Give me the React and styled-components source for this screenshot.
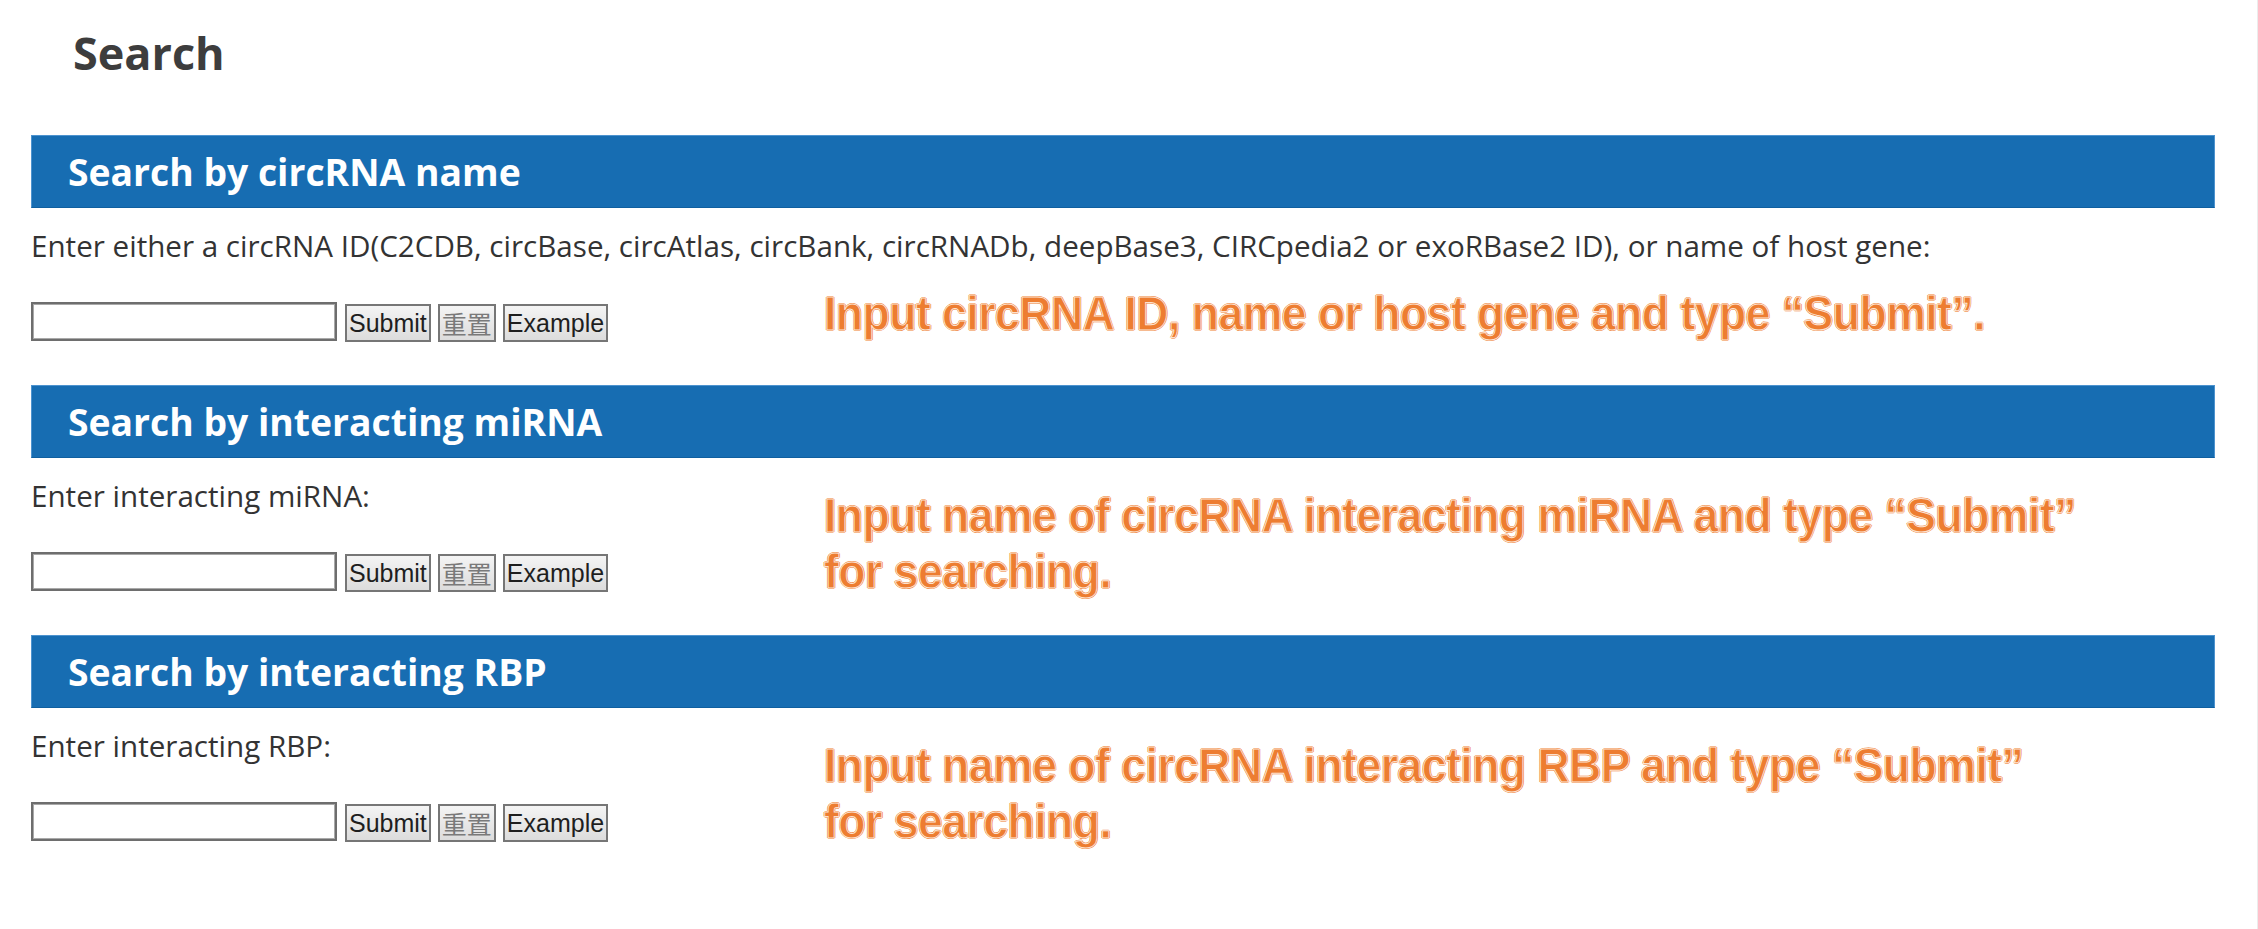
import React from "react";
import styled, { createGlobalStyle, css } from "styled-components";

const GlobalStyle = createGlobalStyle`
  html, body { margin: 0; padding: 0; background: #ffffff; }
  body { font-family: "Open Sans", "Noto Sans", sans-serif; color: #333333; }
`;

const Page = styled.div`
  box-sizing: border-box;
  min-height: 100vh;
  padding: 0 42px 0 31px;
  border-right: 1px solid #ececec;
`;

const Title = styled.h1`
  margin: 0;
  padding: 25px 0 0 42px;
  height: 135px;
  box-sizing: border-box;
  font-size: 45px;
  line-height: 56px;
  font-weight: 700;
  color: #3d3d3d;
`;

const Section = styled.section`
  padding-bottom: 44px;
`;

const Bar = styled.div`
  box-sizing: border-box;
  height: 73px;
  display: flex;
  align-items: center;
  padding-left: 36px;
  background: #176db2;
  border: 1px solid #4d93cf;
  border-bottom-color: #0f5f9f;
`;

const BarTitle = styled.h2`
  margin: 0;
  font-size: 37.3px;
  line-height: 50px;
  font-weight: 700;
  color: #ffffff;
`;

const Body = styled.div`
  display: grid;
  grid-template-columns: 793px 1fr;
  grid-template-rows: 36px 39px;
  row-gap: 38px;
  padding-top: 20px;
  ${({ $layout }) =>
    $layout === "stacked"
      ? css`grid-template-areas: "desc desc" "form note";`
      : css`grid-template-areas: "desc note" "form note";`}
`;

const Desc = styled.p`
  grid-area: desc;
  margin: 0;
  font-size: 29.6px;
  line-height: 36px;
  color: #333333;
  white-space: nowrap;
`;

const Form = styled.form`
  grid-area: form;
  display: flex;
  align-items: center;
  gap: 7px;
`;

const TextInput = styled.input`
  box-sizing: border-box;
  width: 306px;
  height: 39px;
  margin-right: 1px;
  border: 2px solid #6e6e6e;
  box-shadow: inset 0 0 0 1px #a9a9a9;
  background: #ffffff;
  padding: 2px 4px;
  font-size: 24px;
`;

const Button = styled.button`
  box-sizing: border-box;
  height: 38px;
  margin-top: 2px;
  padding: 0 2px;
  border: 2px solid #767676;
  background: linear-gradient(#f4f4f4, #dcdcdc);
  font-family: "Liberation Sans", Arial, sans-serif;
  font-size: 25px;
  line-height: 32px;
  color: #1e1e1e;
  cursor: pointer;
  ${({ $cjk }) =>
    $cjk &&
    css`
      font-family: "Noto Sans CJK TC", "Noto Sans CJK SC", serif;
      font-size: 25px;
      color: #7a7a7a;
    `}
`;

const Note = styled.p`
  grid-area: note;
  margin: 0;
  font-family: "Liberation Sans", Arial, sans-serif;
  font-weight: 700;
  font-size: 48.5px;
  line-height: 56px;
  letter-spacing: -0.6px;
  white-space: nowrap;
  color: #ed7d31;
  -webkit-text-stroke: 1px rgba(255, 240, 228, 0.9);
  text-shadow: 1px 0 0 #ed7d31, -1px 0 0 #ed7d31, 0 1px 0 #ed7d31, 0 -1px 0 #ed7d31;
  transform: scaleX(0.92);
  transform-origin: left center;
  ${({ $layout }) =>
    $layout === "stacked"
      ? css`
          align-self: end;
          margin-bottom: 0;
        `
      : css`
          align-self: start;
          margin-top: 9px;
          margin-bottom: -30px;
        `}
`;

const sections = [
  {
    title: "Search by circRNA name",
    desc:
      "Enter either a circRNA ID(C2CDB, circBase, circAtlas, circBank, circRNADb, deepBase3, CIRCpedia2 or exoRBase2 ID), or name of host gene:",
    layout: "stacked",
    note: ["Input circRNA ID, name or host gene and type \u201cSubmit\u201d."],
  },
  {
    title: "Search by interacting miRNA",
    desc: "Enter interacting miRNA:",
    layout: "beside",
    note: [
      "Input name of circRNA interacting miRNA and type \u201cSubmit\u201d",
      "for searching.",
    ],
  },
  {
    title: "Search by interacting RBP",
    desc: "Enter interacting RBP:",
    layout: "beside",
    note: [
      "Input name of circRNA interacting RBP and type \u201cSubmit\u201d",
      "for searching.",
    ],
  },
];

export default function App() {
  return (
    <>
      <GlobalStyle />
      <Page>
        <Title>Search</Title>
        {sections.map((s) => (
          <Section key={s.title}>
            <Bar>
              <BarTitle>{s.title}</BarTitle>
            </Bar>
            <Body $layout={s.layout}>
              <Desc>{s.desc}</Desc>
              <Form onSubmit={(e) => e.preventDefault()}>
                <TextInput type="text" />
                <Button type="submit">Submit</Button>
                <Button type="reset" $cjk>
                  重置
                </Button>
                <Button type="button">Example</Button>
              </Form>
              <Note $layout={s.layout}>
                {s.note.map((line, i) => (
                  <React.Fragment key={i}>
                    {i > 0 && <br />}
                    {line}
                  </React.Fragment>
                ))}
              </Note>
            </Body>
          </Section>
        ))}
      </Page>
    </>
  );
}
